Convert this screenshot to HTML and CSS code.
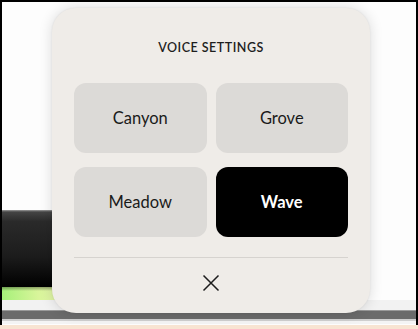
FILE: index.html
```html
<!DOCTYPE html>
<html>
<head>
<meta charset="utf-8">
<link rel="stylesheet" href="styles.css">
</head>
<body>
<div class="screen">
  <div class="page">
    <div class="page-top"></div>
    <div class="dark-row"><div class="dark-bar"></div></div>
    <div class="glow-row"><div class="glow"></div></div>
    <div class="light-row"></div>
    <div class="band"></div>
    <div class="band-light"></div>
  </div>
  <div class="peach"></div>

  <div class="panel" role="dialog" aria-label="Voice settings">
    <h2 class="panel-title">VOICE SETTINGS</h2>
    <div class="voices">
      <button class="voice">Canyon</button>
      <button class="voice">Grove</button>
      <button class="voice">Meadow</button>
      <button class="voice voice-active">Wave</button>
    </div>
    <div class="divider"></div>
    <div class="close-row">
      <button class="close" aria-label="Close">
        <svg width="18" height="18" viewBox="0 0 18 18"><path d="M1.5 1.5 L16.5 16.5 M16.5 1.5 L1.5 16.5" stroke="#1c1c1c" stroke-width="1.5" fill="none"/></svg>
      </button>
    </div>
  </div>
</div>
</body>
</html>
```
FILE: styles.css
```css
* { box-sizing: border-box; }
html, body { margin: 0; padding: 0; }
body {
  width: 418px;
  height: 329px;
  overflow: hidden;
  font-family: "Lato", "Noto Sans", sans-serif;
  background: #000;
}
.screen {
  position: relative;
  width: 418px;
  height: 329px;
  padding: 2px 2px 0 2px;
  display: flex;
  flex-direction: column;
}
.page {
  flex: 1;
  background: #fdfdfd;
  display: flex;
  flex-direction: column;
}
.page-top { height: 208px; background: #fdfdfd; }
.dark-row { height: 77px; display: flex; }
.dark-bar {
  width: 90px;
  background: linear-gradient(#9a9a9a 0, #444 2px, #2a2a2a 15%, #1c1c1c 60%, #000 100%);
}
.glow-row { height: 13px; display: flex; }
.glow {
  width: 90px;
  background:
    linear-gradient(rgba(0,0,0,0.35) 0, rgba(0,0,0,0) 4px),
    linear-gradient(90deg, #a6f07a 0%, #d8f59a 40%, #f0f3c0 100%);
}
.light-row { height: 10px; background: #f2f2f2; }
.band { height: 9px; background: #6b6b6b; border-top: 1px solid #9a9a9a; }
.band-light { height: 5px; background: linear-gradient(#cfcfcf 0, #cfcfcf 2px, #f4f4f4 2px); }
.peach { height: 4px; background: #f8e4d2; margin: 0 -2px; }

.panel {
  position: absolute;
  left: 52px;
  top: 8px;
  width: 318px;
  height: 305px;
  border-radius: 24px;
  background: #efece8;
  box-shadow: 0 0 14px rgba(0, 0, 0, 0.14), 0 0 2px rgba(0, 0, 0, 0.08);
  padding: 30px 22px 0 22px;
  display: flex;
  flex-direction: column;
}
.panel-title {
  margin: 0;
  font-size: 12.5px;
  line-height: 20px;
  font-weight: 600;
  letter-spacing: 0.5px;
  text-align: center;
  color: #1e1e1e;
}
.voices {
  margin-top: 25px;
  display: grid;
  grid-template-columns: 1fr 1fr;
  grid-auto-rows: 70px;
  column-gap: 9px;
  row-gap: 14px;
}
.voice {
  border: none;
  border-radius: 12px;
  background: #dcdad7;
  font-family: inherit;
  font-size: 16.5px;
  color: #1a1a1a;
  padding: 0;
  cursor: pointer;
}
.voice-active {
  background: #000;
  color: #fff;
  font-weight: 700;
}
.divider {
  margin-top: 20px;
  height: 1px;
  background: #d6d3cf;
}
.close-row {
  height: 50px;
  display: flex;
  align-items: center;
  justify-content: center;
}
.close {
  border: none;
  background: transparent;
  padding: 0;
  width: 18px;
  height: 18px;
  display: flex;
  cursor: pointer;
}
```
